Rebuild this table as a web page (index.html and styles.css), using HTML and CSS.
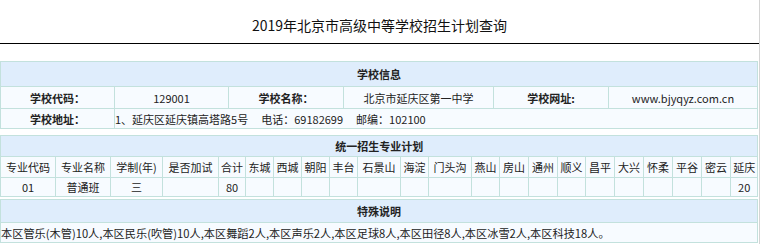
FILE: index.html
```html
<!DOCTYPE html>
<html lang="zh-CN">
<head>
<meta charset="utf-8">
<title>2019年北京市高级中等学校招生计划查询</title>
<link rel="stylesheet" href="styles.css">
</head>
<body>
<div class="page">
  <div class="title">2019年北京市高级中等学校招生计划查询</div>

  <table class="grid info">
    <colgroup>
      <col class="c114"><col class="c114"><col class="c115"><col class="c150"><col class="c115"><col class="c149">
    </colgroup>
    <tr class="head"><th colspan="6">学校信息</th></tr>
    <tr class="row">
      <td class="lbl">学校代码：</td>
      <td>129001</td>
      <td class="lbl">学校名称：</td>
      <td>北京市延庆区第一中学</td>
      <td class="lbl">学校网址:</td>
      <td>www.bjyqyz.com.cn</td>
    </tr>
    <tr class="row last">
      <td class="lbl">学校地址：</td>
      <td colspan="5" class="left">1、延庆区延庆镇高塔路5号<span class="gap"></span>电话：69182699<span class="gap"></span>邮编：102100</td>
    </tr>
  </table>

  <table class="grid plan">
    <colgroup>
      <col class="w55"><col class="w55"><col class="w52"><col class="w56"><col class="w27">
      <col class="w28"><col class="w28"><col class="w28"><col class="w28"><col class="w43">
      <col class="w28"><col class="w43"><col class="w28"><col class="w29"><col class="w29">
      <col class="w28"><col class="w29"><col class="w29"><col class="w29"><col class="w29">
      <col class="w29"><col class="w27">
    </colgroup>
    <tr class="head"><th colspan="22">统一招生专业计划</th></tr>
    <tr class="row">
      <td>专业代码</td><td>专业名称</td><td>学制(年)</td><td>是否加试</td><td>合计</td>
      <td>东城</td><td>西城</td><td>朝阳</td><td>丰台</td><td>石景山</td>
      <td>海淀</td><td>门头沟</td><td>燕山</td><td>房山</td><td>通州</td>
      <td>顺义</td><td>昌平</td><td>大兴</td><td>怀柔</td><td>平谷</td>
      <td>密云</td><td>延庆</td>
    </tr>
    <tr class="row data">
      <td>01</td><td>普通班</td><td>三</td><td></td><td>80</td>
      <td></td><td></td><td></td><td></td><td></td>
      <td></td><td></td><td></td><td></td><td></td>
      <td></td><td></td><td></td><td></td><td></td>
      <td></td><td>20</td>
    </tr>
  </table>

  <table class="grid note">
    <tr class="head"><th>特殊说明</th></tr>
    <tr class="row"><td class="left">本区管乐(木管)10人,本区民乐(吹管)10人,本区舞蹈2人,本区声乐2人,本区足球8人,本区田径8人,本区冰雪2人,本区科技18人。</td></tr>
  </table>
</div>
</body>
</html>
```

FILE: styles.css
```css
html, body {
  margin: 0;
  padding: 0;
  background: #ffffff;
}

.page {
  width: 759px;
  height: 244px;
  border-right: 1px solid #d4d4d4;
  font-family: "Noto Sans CJK SC", "Noto Sans", sans-serif;
  font-size: 11px;
  color: #222;
  overflow: hidden;
}

.title {
  height: 43px;
  line-height: 50px;
  text-align: center;
  font-size: 14px;
  color: #111;
  border-bottom: 1px solid #000;
}

.grid {
  width: 758px;
  border-collapse: collapse;
  table-layout: fixed;
  border: 1px solid #b7dad6;
}

.grid th,
.grid td {
  border: 1px solid #c3e1dd;
  padding: 0;
  text-align: center;
  white-space: nowrap;
  overflow: hidden;
}

.grid .head th {
  background: #dfedfc;
  font-weight: bold;
  color: #222;
}

.grid .row td {
  background: #f7fbff;
}

.grid td.lbl {
  font-weight: bold;
}

.grid td.left {
  text-align: left;
}

.gap {
  display: inline-block;
  width: 13px;
}

.info {
  margin-top: 17px;
}

.info .head th { height: 24px; }
.info .row td { height: 21px; }
.info .row.last td { height: 19px; }

.plan {
  margin-top: 6px;
}

.plan .head th { height: 20px; }
.plan .row td { height: 20px; }
.plan .row.data td { height: 18px; }

.note {
  margin-top: 2px;
}

.note .head th { height: 22px; }
.note .row td { height: 19px; font-size: 11.2px; }

.c114 { width: 114px; }
.c115 { width: 115px; }
.c150 { width: 150px; }
.c149 { width: 149px; }

.w55 { width: 55px; }
.w52 { width: 52px; }
.w56 { width: 56px; }
.w27 { width: 27px; }
.w28 { width: 28px; }
.w29 { width: 29px; }
.w43 { width: 43px; }
```
